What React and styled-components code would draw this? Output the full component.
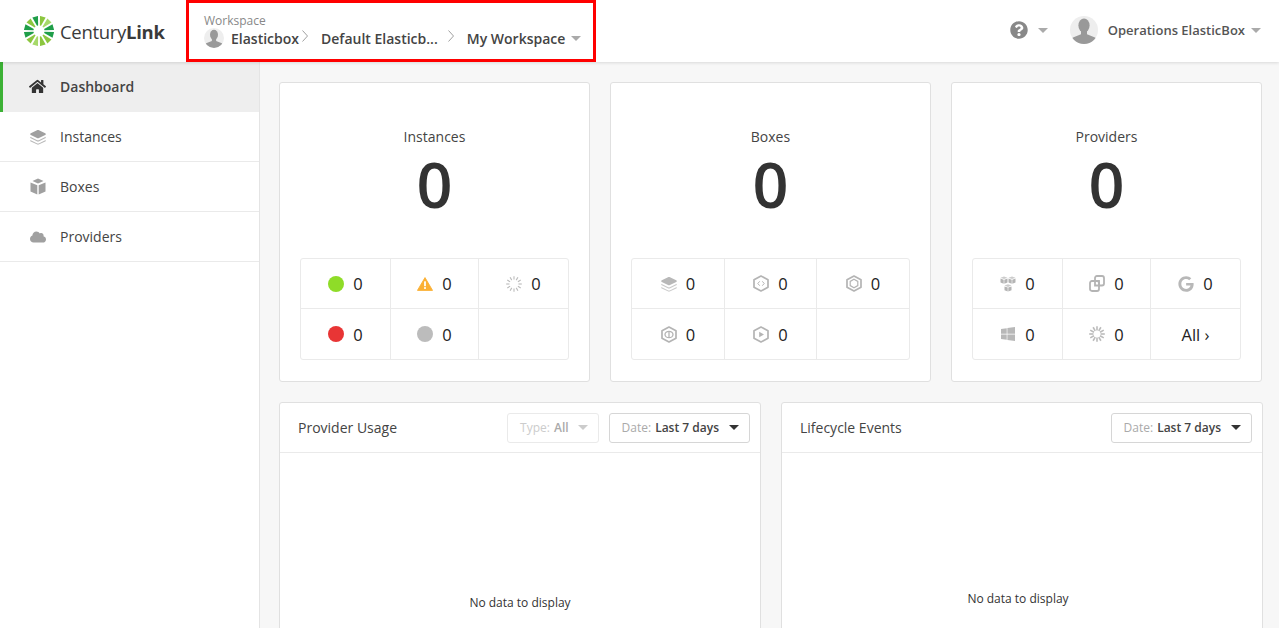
import React from 'react';
import styled, { createGlobalStyle } from 'styled-components';
import { FaHome, FaCloud, FaQuestionCircle, FaWindows, FaGoogle } from 'react-icons/fa';

const GlobalStyle = createGlobalStyle`
html, body {
  margin: 0;
  height: 100%;
  overflow: hidden;
  background: #f7f7f7;
  font-family: 'Open Sans', sans-serif;
  color: #333;
}
* { box-sizing: border-box; }
`;

const Page = styled.div`
width: 1279px;
height: 628px;
overflow: hidden;
display: flex;
flex-direction: column;
`;

const Header = styled.header`
height: 62px;
flex: none;
background: #fff;
display: flex;
align-items: center;
box-shadow: 0 1px 3px rgba(0,0,0,.12);
position: relative;
z-index: 2;
`;

const LogoBox = styled.div`
width: 186px;
flex: none;
padding-left: 24px;
display: flex;
align-items: center;
gap: 6px;
`;

const LogoText = styled.span`
font-size: 18.5px;
letter-spacing: -.3px;
color: #3a3a3a;
b { font-weight: 700; }
`;

const Crumbs = styled.div`
width: 410px;
height: 62px;
border: 3px solid #f00;
padding: 11px 0 0 15px;
`;

const CrumbLabel = styled.div`
font-size: 12px;
line-height: 14px;
color: #888;
`;

const CrumbRow = styled.div`
display: flex;
align-items: center;
margin-top: -2px;
height: 24px;
`;

const CrumbName = styled.span`
font-size: 14px;
font-weight: 600;
color: #444;
white-space: nowrap;
margin-left: ${({ $left }) => $left}px;
`;

const Chevron = styled.svg`
width: 6px;
height: 12px;
margin: -4px 0 0 ${({ $left }) => $left}px;
flex: none;
`;

const Caret = styled.i`
display: inline-block;
width: 0;
height: 0;
border-left: ${({ $size }) => $size || 5}px solid transparent;
border-right: ${({ $size }) => $size || 5}px solid transparent;
border-top: ${({ $size }) => $size || 5}px solid ${({ $color }) => $color || '#aaa'};
margin-left: ${({ $left }) => $left || 0}px;
flex: none;
`;

const HeaderRight = styled.div`
margin-left: auto;
display: flex;
align-items: center;
padding: 0 18px 2px 0;
`;

const HelpGap = styled.span`
width: 22px;
`;

const UserName = styled.span`
font-size: 13px;
font-weight: 600;
color: #555;
margin-left: 10px;
`;

const Body = styled.div`
flex: 1;
display: flex;
min-height: 0;
`;

const Sidebar = styled.nav`
width: 260px;
flex: none;
background: #fff;
border-right: 1px solid #e4e4e4;
`;

const NavItem = styled.div`
height: 50px;
display: flex;
align-items: center;
padding: ${({ $active }) => ($active ? '0 0 2px 26px' : '0 0 0 29px')};
gap: 14px;
font-size: 14px;
font-weight: ${({ $active }) => ($active ? 600 : 400)};
color: #444;
background: ${({ $active }) => ($active ? '#eee' : '#fff')};
border-left: ${({ $active }) => ($active ? '3px solid #3cb135' : 'none')};
border-bottom: ${({ $active }) => ($active ? 'none' : '1px solid #eaeaea')};
svg { color: ${({ $active }) => ($active ? '#333' : '#a0a0a0')}; }
`;

const NavIcon = styled.span`
width: 17px;
display: flex;
justify-content: center;
`;

const Main = styled.main`
flex: 1;
padding: 20px 16px 0 19px;
min-width: 0;
`;

const Stats = styled.div`
display: grid;
grid-template-columns: 311px 321px 311px;
gap: 20px;
`;

const Card = styled.section`
height: 300px;
background: #fff;
border: 1px solid #e0e0e0;
border-radius: 3px;
padding: 0 20px;
display: flex;
flex-direction: column;
align-items: center;
`;

const CardTitle = styled.div`
font-size: 14px;
line-height: 20px;
margin-top: 44px;
color: #444;
`;

const CardCount = styled.div`
font-size: 63px;
font-weight: 600;
line-height: 70px;
margin-top: 2px;
margin-bottom: 2px;
color: #333;
`;

const Tiles = styled.div`
margin-top: 37px;
width: 100%;
height: 102px;
border: 1px solid #eaeaea;
border-radius: 3px;
display: grid;
grid-template-columns: ${({ $cols }) => $cols};
grid-template-rows: 50px 50px;
`;

const Tile = styled.div`
display: flex;
align-items: center;
justify-content: center;
gap: 9px;
font-size: 16.500px;
color: #222;
border-right: ${({ $col }) => ($col < 2 ? '1px solid #eaeaea' : 'none')};
border-bottom: ${({ $row }) => ($row === 0 ? '1px solid #eaeaea' : 'none')};
`;

const Dot = styled.span`
width: 16px;
height: 16px;
border-radius: 50%;
background: ${({ $color }) => $color};
`;

const TileIcon = styled.span`
width: 16px;
height: 16px;
display: flex;
align-items: center;
justify-content: center;
color: #b8b8b8;
`;

const Panels = styled.div`
display: grid;
grid-template-columns: 482px 482px;
gap: 20px;
margin-top: 20px;
`;

const Panel = styled.section`
background: #fff;
border: 1px solid #e0e0e0;
border-radius: 3px 3px 0 0;
`;

const PanelHead = styled.div`
height: 50px;
display: flex;
align-items: center;
padding: 0 10px 0 18px;
border-bottom: 1px solid #eaeaea;
`;

const PanelTitle = styled.div`
font-size: 14px;
color: #444;
margin-right: auto;
`;

const Select = styled.div`
height: 30px;
margin-left: 10px;
padding: 0 10px 0 12px;
display: flex;
align-items: center;
font-size: 12px;
font-weight: 600;
color: ${({ $disabled }) => ($disabled ? '#aaa' : '#444')};
border: 1px solid ${({ $disabled }) => ($disabled ? '#eaeaea' : '#d6d6d6')};
border-radius: 3px;
span { font-weight: 400; color: ${({ $disabled }) => ($disabled ? '#ccc' : '#aaa')}; margin-right: 4px; }
`;

const PanelBody = styled.div`
height: ${({ $height }) => $height}px;
padding-right: ${({ $shift }) => $shift || 0}px;
display: flex;
align-items: center;
justify-content: center;
font-size: 12px;
color: #333;
`;

const Avatar = ({ size }) => (
  <svg width={size} height={size} viewBox="0 0 28 28" style={{ flex: 'none' }}>
    <circle cx="14" cy="14" r="14" fill="#eee" />
    <clipPath id={`av${size}`}><circle cx="14" cy="14" r="14" /></clipPath>
    <g clipPath={`url(#av${size})`} fill="#999">
      <ellipse cx="14" cy="9.5" rx="5.6" ry="7" />
      <path d="M11 15h6v3.2l8 3.3c1.5.7 2 2.5 2 6.5H1c0-4 .5-5.8 2-6.5l8-3.3z" />
    </g>
  </svg>
);

const ChevronIcon = ({ left }) => (
  <Chevron $left={left} viewBox="0 0 6 12">
    <path d="M.5.5 5.5 6 .5 11.500" fill="none" stroke="#888" strokeWidth=".8" />
  </Chevron>
);

const lime = '#8cc63f';
const light = '#a6d96a';
const dark = '#1f9e49';
const rayColors = [lime, light, dark, dark, lime, lime, light, lime, dark, dark, lime, dark];

const Logo = () => (
  <svg width="30" height="30" viewBox="-15 -15 30 30">
    {rayColors.map((color, i) => (
      <path
        key={i}
        d="M-.6 -5.500 L.6 -5.500 L2.900 -14.800 L-2.900 -14.800 Z"
        fill={color}
        transform={`rotate(${i * 30 + 15})`}
      />
    ))}
  </svg>
);

const Stack = () => (
  <svg width="16" height="16" viewBox="0 0 16 16" fill="currentColor">
    <path d="M7 1.200c.6-.3 1.400-.3 2 0l6.200 3c.9.500.9 1.300 0 1.800L9 9c-.6.300-1.400.3-2 0L.8 6c-.9-.5-.9-1.300 0-1.800z" />
    <path d="M.3 7.800 7.300 11.200c.4.200 1 .2 1.400 0l7-3.400v1.300l-7 3.500c-.4.200-1 .2-1.400 0l-7-3.500z" opacity=".75" />
    <path d="M.3 11 7.300 14.400c.4.200 1 .2 1.400 0l7-3.400v1.300l-7 3.300c-.4.200-1 .2-1.400 0l-7-3.300z" opacity=".75" />
  </svg>
);

const BoxIcon = () => (
  <svg width="16" height="17" viewBox="0 0 16 17" fill="currentColor">
    <path d="M8 .5 13.500 3 8 5.500 2.500 3z" />
    <path d="M.5 4.500 7.300 7.300v9.200L.5 13.400z" />
    <path d="M15.500 4.500 8.700 7.300v9.200l6.800-3.100z" />
  </svg>
);

const Spinner = ({ bold }) => (
  <svg width="16" height="16" viewBox="-8 -8 16 16">
    {Array.from({ length: 12 }, (_, i) => (
      <line
        key={i}
        x1="0"
        y1={bold ? -3.500 : -4.500}
        x2="0"
        y2="-7.800"
        stroke="#bbb"
        strokeWidth={bold ? 1.600 : 1.100}
        transform={`rotate(${i * 30})`}
      />
    ))}
  </svg>
);

const Warning = () => (
  <svg width="18" height="16" viewBox="0 0 18 16">
    <path d="M9 .8 17.500 15.200H.5z" fill="#fbb034" stroke="#fbb034" strokeLinejoin="round" />
    <rect x="8" y="5" width="2" height="5.500" fill="#fff" />
    <rect x="8" y="11.500" width="2" height="2" fill="#fff" />
  </svg>
);

const Hex = ({ children }) => (
  <svg width="16" height="17" viewBox="0 0 16 17" fill="none" stroke="#b4b4b4">
    <path d="M8 1 15 4.800v7.400L8 16 1 12.200V4.800z" strokeWidth="1.700" strokeLinejoin="round" />
    {children}
  </svg>
);

const HexCode = () => (
  <Hex><path d="M6.700 6.300 4.800 8.500l1.900 2.200M9.300 6.300l1.900 2.200-1.900 2.200" strokeWidth="1" /></Hex>
);
const HexRing = () => (
  <Hex><path d="M8 4.300 11.800 6.400v4.200L8 12.700 4.200 10.600V6.400z" strokeWidth="1.200" /></Hex>
);
const HexCloud = () => (
  <Hex>
    <ellipse cx="8" cy="8.500" rx="4" ry="3.200" strokeWidth="1.300" />
    <path d="M8 5.300v6.400" strokeWidth="1.300" />
  </Hex>
);
const HexPlay = () => (
  <Hex><path d="M6.200 5.800 11 8.500 6.200 11.200z" fill="#b4b4b4" stroke="none" /></Hex>
);

const SmallCube = ({ x, y }) => (
  <g transform={`translate(${x} ${y})`}>
    <path d="M3.500 0 7 1.300 3.500 2.600 0 1.300z" fill="#ccc" />
    <path d="M0 2.100 3.200 3.300v4L0 6z" fill="#b4b4b4" />
    <path d="M7 2.100 3.800 3.300v4L7 6z" fill="#b4b4b4" />
  </g>
);

const Cubes = () => (
  <svg width="16" height="16" viewBox="0 0 16 16">
    <SmallCube x={0.5} y={0.5} />
    <SmallCube x={8.500} y={0.5} />
    <SmallCube x={4.500} y={8.300} />
  </svg>
);

const Vmware = () => (
  <svg width="16" height="17" viewBox="0 0 16 17" fill="none" stroke="#b4b4b4" strokeWidth="1.800">
    <path d="M6 5.500V3C6 1.900 6.800 1 8 1h5c1.200 0 2 .9 2 2v5.500c0 1.200-.8 2-2 2h-3" />
    <path d="M1 8c0-1.200.8-2 2-2h5c1.200 0 2 .8 2 2v6c0 1.200-.8 2-2 2H3c-1.200 0-2-.8-2-2z" />
    <path d="M6 10.500V6h4v4.500z" />
  </svg>
);

const statCards = [
  {
    title: 'Instances',
    cols: '90px 88px 1fr',
    tiles: [
      { icon: <Dot $color="#8fdc28" />, n: 0 },
      { icon: <Warning />, n: 0 },
      { icon: <Spinner />, n: 0 },
      { icon: <Dot $color="#e83535" />, n: 0 },
      { icon: <Dot $color="#bcbcbc" />, n: 0 },
      {},
    ],
  },
  {
    title: 'Boxes',
    cols: '93px 92px 1fr',
    tiles: [
      { icon: <Stack />, n: 0 },
      { icon: <HexCode />, n: 0 },
      { icon: <HexRing />, n: 0 },
      { icon: <HexCloud />, n: 0 },
      { icon: <HexPlay />, n: 0 },
      {},
    ],
  },
  {
    title: 'Providers',
    cols: '90px 88px 1fr',
    tiles: [
      { icon: <Cubes />, n: 0 },
      { icon: <Vmware />, n: 0 },
      { icon: <FaGoogle size={16} />, n: 0 },
      { icon: <FaWindows size={16} />, n: 0 },
      { icon: <Spinner bold />, n: 0 },
      { text: 'All ›' },
    ],
  },
];

const navItems = [
  { label: 'Dashboard', icon: <FaHome size={17} />, active: true },
  { label: 'Instances', icon: <Stack /> },
  { label: 'Boxes', icon: <BoxIcon /> },
  { label: 'Providers', icon: <FaCloud size={16} /> },
];

export default function App() {
  return (
    <Page>
      <GlobalStyle />
      <Header>
        <LogoBox>
          <Logo />
          <LogoText>Century<b>Link</b></LogoText>
        </LogoBox>
        <Crumbs>
          <CrumbLabel>Workspace</CrumbLabel>
          <CrumbRow>
            <Avatar size={20} />
            <CrumbName $left={7}>Elasticbox</CrumbName>
            <ChevronIcon left={3} />
            <CrumbName $left={13}>Default Elasticb...</CrumbName>
            <ChevronIcon left={10} />
            <CrumbName $left={13}>My Workspace</CrumbName>
            <Caret $left={6} />
          </CrumbRow>
        </Crumbs>
        <HeaderRight>
          <FaQuestionCircle size={18} color="#888" />
          <Caret $left={10} />
          <HelpGap />
          <Avatar size={28} />
          <UserName>Operations ElasticBox</UserName>
          <Caret $left={6} />
        </HeaderRight>
      </Header>
      <Body>
        <Sidebar>
          {navItems.map((item) => (
            <NavItem key={item.label} $active={item.active}>
              <NavIcon>{item.icon}</NavIcon>
              {item.label}
            </NavItem>
          ))}
        </Sidebar>
        <Main>
          <Stats>
            {statCards.map((card) => (
              <Card key={card.title}>
                <CardTitle>{card.title}</CardTitle>
                <CardCount>0</CardCount>
                <Tiles $cols={card.cols}>
                  {card.tiles.map((t, i) => (
                    <Tile key={i} $col={i % 3} $row={Math.floor(i / 3)}>
                      {t.icon && <TileIcon>{t.icon}</TileIcon>}
                      {t.icon && t.n}
                      {t.text}
                    </Tile>
                  ))}
                </Tiles>
              </Card>
            ))}
          </Stats>
          <Panels>
            <Panel>
              <PanelHead>
                <PanelTitle>Provider Usage</PanelTitle>
                <Select $disabled><span>Type:</span> All<Caret $left={9} $color="#ccc" /></Select>
                <Select><span>Date:</span> Last 7 days<Caret $left={10} $color="#333" /></Select>
              </PanelHead>
              <PanelBody $height={298}>No data to display</PanelBody>
            </Panel>
            <Panel>
              <PanelHead>
                <PanelTitle>Lifecycle Events</PanelTitle>
                <Select><span>Date:</span> Last 7 days<Caret $left={10} $color="#333" /></Select>
              </PanelHead>
              <PanelBody $height={290} $shift={8}>No data to display</PanelBody>
            </Panel>
          </Panels>
        </Main>
      </Body>
    </Page>
  );
}
